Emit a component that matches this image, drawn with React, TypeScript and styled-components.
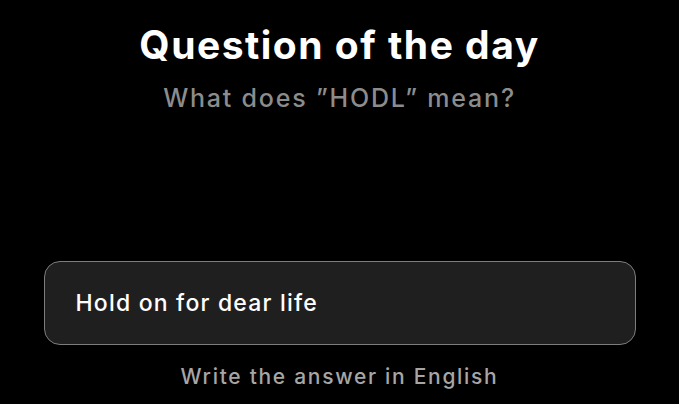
import React from "react";
import styled, { createGlobalStyle } from "styled-components";

const Global = createGlobalStyle`
  html, body {
    margin: 0;
    padding: 0;
    background: #000;
  }
  body {
    font-family: Inter, "Noto Sans", sans-serif;
    -webkit-font-smoothing: antialiased;
  }
`;

const Page = styled.main`
  width: 679px;
  height: 404px;
  background: #000;
  display: flex;
  flex-direction: column;
  align-items: center;
  box-sizing: border-box;
  padding-top: 22px;
  overflow: hidden;
`;

const Title = styled.h1`
  margin: 0;
  font-size: 39px;
  line-height: 46px;
  font-weight: 700;
  color: #fff;
  letter-spacing: 1.5px;
`;

const Subtitle = styled.p`
  margin: 15px 0 0;
  font-size: 25px;
  line-height: 30px;
  font-weight: 500;
  color: #8c8c8c;
  letter-spacing: 1.8px;
`;

const AnswerBox = styled.div`
  margin-top: 148px;
  width: 592px;
  height: 84px;
  box-sizing: border-box;
  border: 1.5px solid #7d7d7d;
  border-radius: 16px;
  background: #1f1f1f;
  display: flex;
  align-items: center;
  padding: 0 31px;
`;

const AnswerText = styled.span`
  font-size: 23px;
  font-weight: 500;
  color: #fff;
  letter-spacing: 1.2px;
`;

const Hint = styled.p`
  margin: 19px 0 0;
  font-size: 21px;
  line-height: 26px;
  font-weight: 500;
  color: #a6a6a6;
  letter-spacing: 1.7px;
`;

export default function App() {
  return (
    <>
      <Global />
      <Page>
        <Title>Question of the day</Title>
        <Subtitle>What does ”HODL” mean?</Subtitle>
        <AnswerBox>
          <AnswerText>Hold on for dear life</AnswerText>
        </AnswerBox>
        <Hint>Write the answer in English</Hint>
      </Page>
    </>
  );
}
